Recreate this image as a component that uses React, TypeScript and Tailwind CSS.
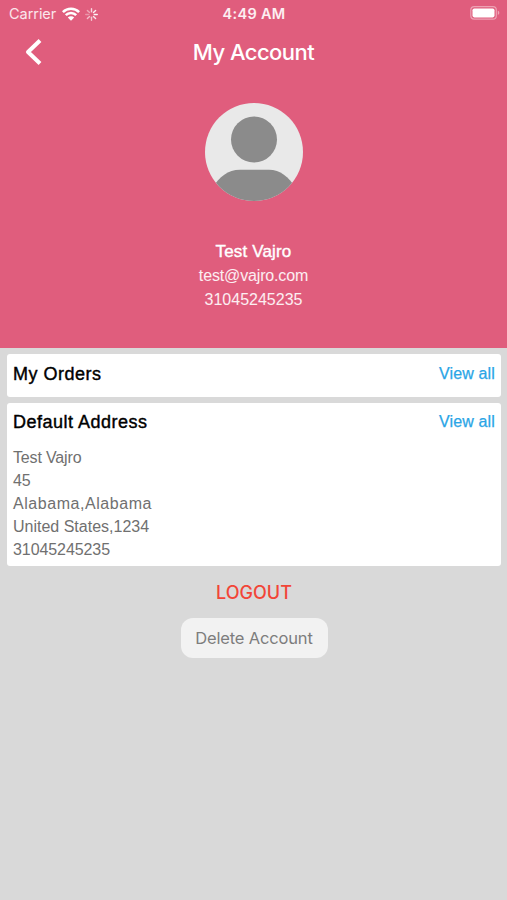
import React from 'react';

const helvetica = "font-['Liberation_Sans',Arial,sans-serif]";
const system = "font-['Inter',sans-serif]";

function StatusBar() {
  return (
    <div className={`${system} grid h-7 grid-cols-3 items-center pl-[9px] pr-[6px]`}>
      <div className="flex items-center">
        <span className="text-[14.5px] leading-7 tracking-[-0.05px] text-white/85">Carrier</span>
        <svg className="ml-[6px]" width="18" height="14" viewBox="0 0 18 14" fill="none" stroke="white" strokeWidth="2.6">
          <path d="M0.9 5.1A11.6 11.6 0 0 1 17.1 5.1" />
          <path d="M3.8 8.2A7.4 7.4 0 0 1 14.2 8.2" />
          <path d="M9 13.8L5.8 10.6A4.6 4.6 0 0 1 12.2 10.6Z" fill="white" stroke="none" />
        </svg>
        <svg className="ml-[5px]" width="13" height="13" viewBox="0 0 12 12" stroke="white" strokeWidth="1.3" strokeLinecap="round">
          <path d="M6 .7V3.5" opacity=".75" />
          <path d="M9.8 2.2L7.8 4.2" opacity=".9" />
          <path d="M11.3 6H8.5" opacity=".95" />
          <path d="M9.8 9.8L7.8 7.8" opacity=".85" />
          <path d="M6 11.3V8.5" opacity=".65" />
          <path d="M2.2 9.8L4.2 7.8" opacity=".6" />
          <path d="M.7 6H3.5" opacity=".35" />
          <path d="M2.2 2.2L4.2 4.2" opacity=".45" />
        </svg>
      </div>
      <span className="pr-[2px] text-center text-[14.5px] font-semibold leading-7 tracking-[0.3px] text-white/90">4:49 AM</span>
      <svg className="mr-px mb-[2px] justify-self-end" width="30" height="14" viewBox="0 0 30 14" fill="none">
        <rect x=".8" y=".6" width="25.5" height="12.6" rx="3.4" stroke="white" strokeOpacity=".42" strokeWidth="1.2" />
        <rect x="2.5" y="2.4" width="22" height="9" rx="1.8" fill="white" />
        <path d="M27.8 4.8C29.8 5.5 29.8 8.3 27.8 9Z" fill="white" fillOpacity=".45" />
      </svg>
    </div>
  );
}

function Avatar() {
  return (
    <svg width="98" height="98" viewBox="0 0 98 98" className="mx-auto block">
      <defs>
        <clipPath id="avatar-clip"><circle cx="49" cy="49" r="49" /></clipPath>
      </defs>
      <g clipPath="url(#avatar-clip)">
        <rect width="98" height="98" fill="#e9e9e9" />
        <circle cx="49" cy="36.5" r="23" fill="#8b8b8b" />
        <path d="M8 84C14 74 23 66.7 35 66.7H64C75 66.7 84 74 90 84V98H8Z" fill="#8b8b8b" />
      </g>
    </svg>
  );
}

function SectionHeader({ title }: { title: string }) {
  return (
    <div className="flex items-center justify-between leading-[22px]">
      <h2 className="text-[18px] tracking-[0.5px] text-black [-webkit-text-stroke:0.4px_black]">{title}</h2>
      <a className="text-[16px] tracking-[0.15px] text-[#2aa5e6] [-webkit-text-stroke:0.25px_#2aa5e6]">View all</a>
    </div>
  );
}

const address = [
  { text: 'Test Vajro', tracking: 'tracking-[-0.15px]' },
  { text: '45', tracking: 'tracking-[-0.1px]' },
  { text: 'Alabama,Alabama', tracking: 'tracking-[0.55px]' },
  { text: 'United States,1234', tracking: 'tracking-normal' },
  { text: '31045245235', tracking: 'tracking-[-0.08px]' },
];

export default function App() {
  return (
    <div className={`${helvetica} flex h-screen w-full flex-col overflow-hidden bg-[#d9d9d9]`}>
      <header className="h-[348px] shrink-0 bg-[#e05d7d] text-white">
        <StatusBar />
        <div className="grid h-12 grid-cols-[72px_1fr_72px] items-center">
          <svg className="ml-[25px]" width="17" height="26" viewBox="0 0 17 26" fill="none" stroke="white" strokeWidth="4" strokeLinejoin="round">
            <path d="M15 1.5L3 13L15 24.5" />
          </svg>
          <h1 className={`${system} text-center text-[22px] font-medium tracking-[-0.55px]`}>My Account</h1>
        </div>
        <div className="mt-[27px]"><Avatar /></div>
        <div className="mt-[39px] text-center text-[16px] leading-[24px] text-white/90">
          <p className="text-[17px] tracking-[0.15px] text-white [-webkit-text-stroke:0.4px_white]">Test Vajro</p>
          <p className="tracking-[-0.15px]">test@vajro.com</p>
          <p>31045245235</p>
        </div>
      </header>
      <main className="flex flex-col pl-[7px] pr-[6px] pt-[6px]">
        <section className="h-[43px] rounded-[3px] bg-white px-[6px] pt-[9px]">
          <SectionHeader title="My Orders" />
        </section>
        <section className="mt-[6px] h-[163px] rounded-[3px] bg-white px-[6px] pt-[8px]">
          <SectionHeader title="Default Address" />
          <div className="mt-[13px] text-[16px] leading-[23px] text-[#707070]">
            {address.map(({ text, tracking }) => <p key={text} className={tracking}>{text}</p>)}
          </div>
        </section>
        <button className={`${system} mt-[15px] self-center text-[18px] font-medium leading-[24px] text-[#f24537]`}>LOGOUT</button>
        <button className={`${system} mt-[13px] h-[40px] w-[147px] self-center rounded-[12px] bg-[#f2f2f2] text-[16.5px] tracking-[-0.17px] text-[#7d7d7d]`}>Delete Account</button>
      </main>
    </div>
  );
}
